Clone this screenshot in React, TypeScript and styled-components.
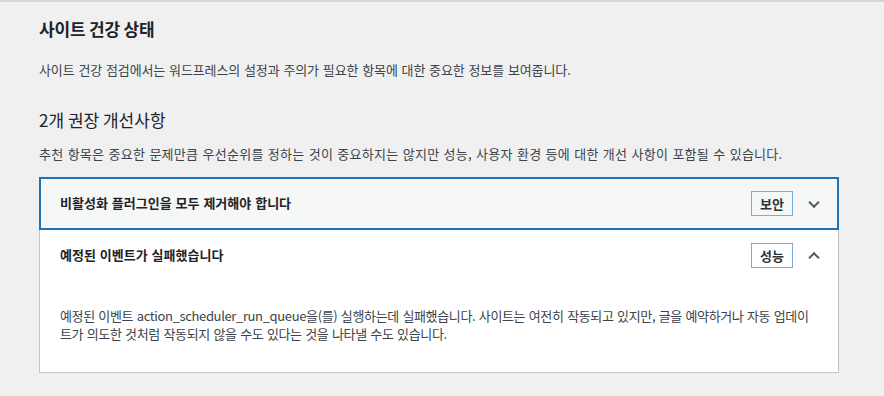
import React from "react";
import styled, { createGlobalStyle } from "styled-components";

const GlobalStyle = createGlobalStyle`
  html, body {
    margin: 0;
    padding: 0;
    background: #f0f0f1;
  }
  body {
    font-family: "Noto Sans CJK KR", "Noto Sans", sans-serif;
    font-size: 13px;
    line-height: 1.4;
    color: #3c434a;
  }
  * { box-sizing: border-box; }
`;

const Page = styled.div`
  border-top: 2px solid #d4d5d8;
  min-height: 396px;
`;

const Body = styled.main`
  width: 800px;
  margin-left: 39px;
  padding-top: 15px;
`;

const Title = styled.h2`
  margin: 0;
  font-size: 17px;
  font-weight: 700;
  color: #1d2327;
  letter-spacing: -0.2px;
  line-height: 24px;
`;

const Lead = styled.p<{ $top: number; $ls: number }>`
  margin: ${(p) => p.$top}px 0 0;
  font-size: 13px;
  color: #3c434a;
  letter-spacing: ${(p) => p.$ls}px;
  word-spacing: 1px;
  line-height: 18px;
`;

const CountTitle = styled.h3`
  margin: 29px 0 0;
  font-size: 17px;
  font-weight: 400;
  color: #1d2327;
  letter-spacing: 0;
  line-height: 24px;
`;

const Accordion = styled.div`
  margin-top: 14px;
  border: 1px solid #c3c4c7;
  background: #fff;
`;

const Heading = styled.h4<{ $first?: boolean }>`
  margin: 0;
  border-top: ${(p) => (p.$first ? "none" : "1px solid #c3c4c7")};
  font-size: inherit;
  font-weight: 600;
`;

const Trigger = styled.button<{ $focused?: boolean }>`
  display: flex;
  align-items: center;
  justify-content: space-between;
  position: relative;
  width: 100%;
  min-height: 50px;
  margin: 0;
  padding: 13px 45px 13px 20px;
  border: 0;
  font: inherit;
  text-align: left;
  color: #1d2327;
  cursor: pointer;
  background: ${(p) => (p.$focused ? "#f6f7f7" : "#fff")};
  outline: ${(p) => (p.$focused ? "2px solid #2271b1" : "none")};
  outline-offset: -1px;
`;

const TriggerTitle = styled.span`
  flex-grow: 1;
  font-weight: 700;
  letter-spacing: 0;
  word-spacing: 1px;
  color: #1d2327;
`;

const Badge = styled.span`
  border: 1px solid #72aee6;
  padding: 4px 8px 3px;
  font-weight: 700;
  color: #2c3338;
  line-height: 16px;
  letter-spacing: 0;
`;

const Chevron = styled.span<{ $open?: boolean }>`
  position: absolute;
  right: 20px;
  top: 50%;
  width: 8px;
  height: 8px;
  border: solid #50575e;
  border-width: 0 2px 2px 0;
  transform: ${(p) =>
    p.$open ? "translateY(-30%) rotate(-135deg)" : "translateY(-70%) rotate(45deg)"};
`;

const Panel = styled.div`
  padding: 13px 20px 16px;
  background: #fff;
`;

const PanelText = styled.p`
  margin: 13px 0;
  letter-spacing: -0.36px;
  word-spacing: 1px;
  line-height: 18px;
  color: #3c434a;
`;

type Item = { title: string; badge: string; open: boolean; focused: boolean; body?: string };

const items: Item[] = [
  { title: "비활성화 플러그인을 모두 제거해야 합니다", badge: "보안", open: false, focused: true },
  {
    title: "예정된 이벤트가 실패했습니다",
    badge: "성능",
    open: true,
    focused: false,
    body:
      "예정된 이벤트 action_scheduler_run_queue을(를) 실행하는데 실패했습니다. 사이트는 여전히 작동되고 있지만, 글을 예약하거나 자동 업데이트가 의도한 것처럼 작동되지 않을 수도 있다는 것을 나타낼 수도 있습니다.",
  },
];

export default function App() {
  return (
    <>
      <GlobalStyle />
      <Page>
        <Body>
          <Title>사이트 건강 상태</Title>
          <Lead $top={20} $ls={-0.1}>
            사이트 건강 점검에서는 워드프레스의 설정과 주의가 필요한 항목에 대한 중요한 정보를 보여줍니다.
          </Lead>
          <CountTitle>2개 권장 개선사항</CountTitle>
          <Lead $top={13} $ls={0.27}>
            추천 항목은 중요한 문제만큼 우선순위를 정하는 것이 중요하지는 않지만 성능, 사용자 환경 등에 대한 개선 사항이 포함될 수 있습니다.
          </Lead>
          <Accordion>
            {items.map((it, i) => (
              <React.Fragment key={it.title}>
                <Heading $first={i === 0}>
                  <Trigger $focused={it.focused} aria-expanded={it.open}>
                    <TriggerTitle>{it.title}</TriggerTitle>
                    <Badge>{it.badge}</Badge>
                    <Chevron $open={it.open} />
                  </Trigger>
                </Heading>
                {it.open && it.body && (
                  <Panel>
                    <PanelText>{it.body}</PanelText>
                  </Panel>
                )}
              </React.Fragment>
            ))}
          </Accordion>
        </Body>
      </Page>
    </>
  );
}
